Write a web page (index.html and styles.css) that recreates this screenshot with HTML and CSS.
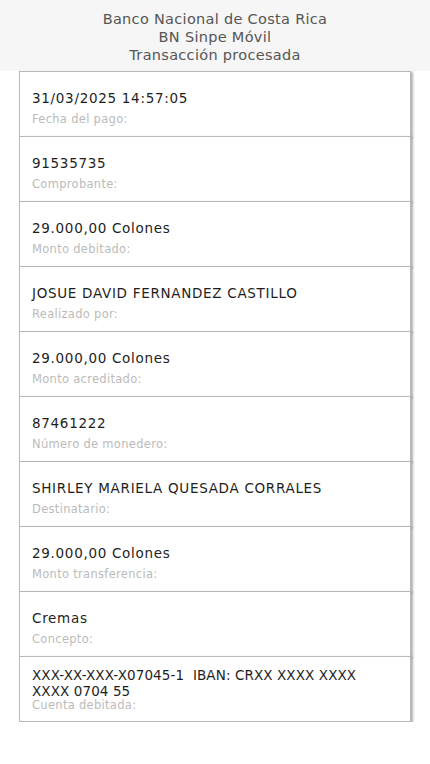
FILE: index.html
```html
<!DOCTYPE html>
<html lang="es">
<head>
<meta charset="utf-8">
<link rel="stylesheet" href="styles.css">
</head>
<body>
<header class="head">
  <div>Banco Nacional de Costa Rica</div>
  <div>BN Sinpe Móvil</div>
  <div>Transacción procesada</div>
</header>
<main class="list">
  <div class="card"><div class="val">31/03/2025 14:57:05</div><div class="lbl">Fecha del pago:</div></div>
  <div class="card"><div class="val">91535735</div><div class="lbl">Comprobante:</div></div>
  <div class="card"><div class="val">29.000,00 Colones</div><div class="lbl">Monto debitado:</div></div>
  <div class="card"><div class="val">JOSUE DAVID FERNANDEZ CASTILLO</div><div class="lbl">Realizado por:</div></div>
  <div class="card"><div class="val">29.000,00 Colones</div><div class="lbl">Monto acreditado:</div></div>
  <div class="card"><div class="val">87461222</div><div class="lbl">Número de monedero:</div></div>
  <div class="card"><div class="val">SHIRLEY MARIELA QUESADA CORRALES</div><div class="lbl">Destinatario:</div></div>
  <div class="card"><div class="val">29.000,00 Colones</div><div class="lbl">Monto transferencia:</div></div>
  <div class="card"><div class="val">Cremas</div><div class="lbl">Concepto:</div></div>
  <div class="card multi"><div class="val">XXX-XX-XXX-X07045-1&nbsp; IBAN: CRXX XXXX XXXX<br>XXXX 0704 55</div><div class="lbl">Cuenta debitada:</div></div>
</main>
</body>
</html>
```
FILE: styles.css
```css
html, body { margin: 0; padding: 0; background: #fff; }
body { font-family: "DejaVu Sans", sans-serif; width: 430px; }
.head {
  background: #f6f6f6;
  height: 71px;
  box-sizing: border-box;
  padding-top: 10px;
  text-align: center;
  color: #555;
  font-size: 14.5px;
  letter-spacing: 0.3px;
  line-height: 18px;
}
.list { padding: 0 19px 0 19px; }
.card {
  height: 66px;
  box-sizing: border-box;
  border: 1px solid #b8b8b8;
  box-shadow: 2px 1px 2px rgba(0,0,0,0.3);
  background: #fff;
  padding: 17px 12px 0 12px;
  margin-top: -1px;
}
.card:first-child { margin-top: 0; }
.val { color: #1e1e1e; font-size: 13.5px; line-height: 18px; letter-spacing: 0.7px; }
.lbl { color: #bbb; font-size: 11.5px; line-height: 16px; margin-top: 4px; letter-spacing: 0.3px; }
.multi { padding-top: 10px; }
.multi .val { line-height: 16px; letter-spacing: 0.1px; }
.multi .lbl { margin-top: 1px; line-height: 11px; }
```
